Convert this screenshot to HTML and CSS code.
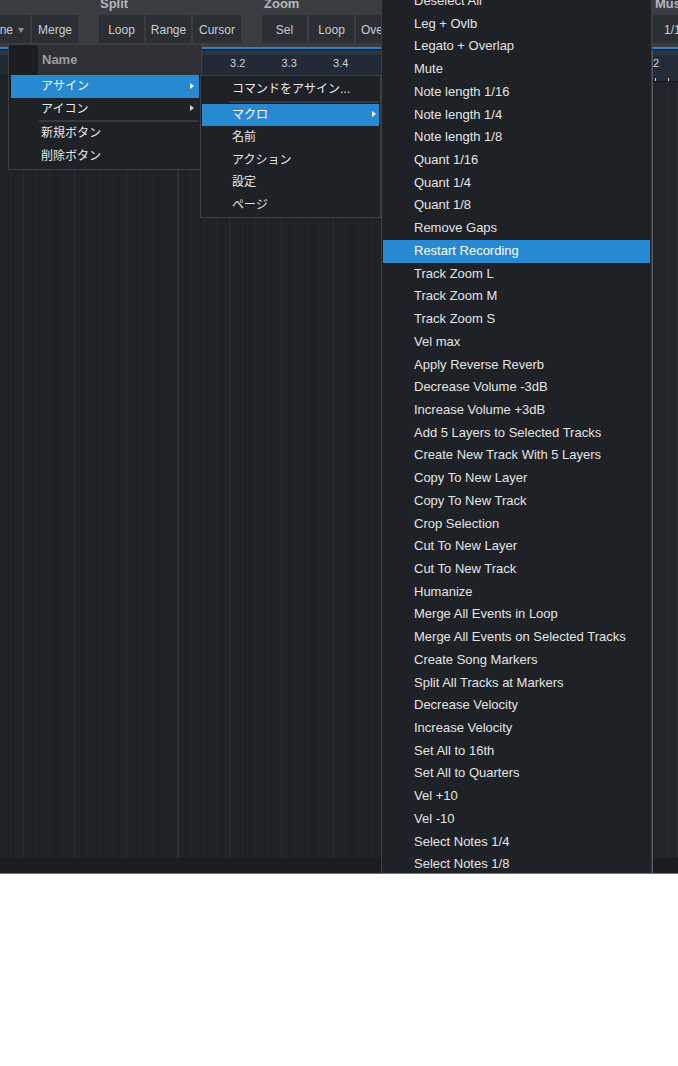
FILE: index.html
```html
<!DOCTYPE html>
<html lang="ja">
<head>
<meta charset="utf-8">
<title>Macro menu</title>
<link rel="stylesheet" href="styles.css">
</head>
<body>
<div class="app">
  <div class="toolbar">
    <div class="group g-edit">
      <div class="group-label"></div>
      <div class="btns">
        <div class="btn btn-ne"><span>ne</span><span class="caret"></span></div>
        <div class="btn btn-merge">Merge</div>
      </div>
    </div>
    <div class="group g-split">
      <div class="group-label">Split</div>
      <div class="btns">
        <div class="btn">Loop</div>
        <div class="btn">Range</div>
        <div class="btn btn-cursor">Cursor</div>
      </div>
    </div>
    <div class="group g-zoom">
      <div class="group-label">Zoom</div>
      <div class="btns">
        <div class="btn">Sel</div>
        <div class="btn">Loop</div>
        <div class="btn btn-ove">Overlap</div>
      </div>
    </div>
    <div class="group g-mus">
      <div class="group-label">Music</div>
      <div class="btns">
        <div class="btn btn-mus">1/16</div>
      </div>
    </div>
  </div>

  <div class="main">
    <div class="pane pane-left">
      <div class="ruler"><span>3.2</span><span>3.3</span><span>3.4</span></div>
      <div class="tracks"></div>
      <div class="strip"></div>
    </div>
    <div class="pane pane-right">
      <div class="ruler ruler-right">2</div>
      <div class="tracks tracks-right"></div>
      <div class="strip"></div>
    </div>
  </div>

  <div class="menu menu-assign">
    <div class="menu-head"><div class="head-icon"></div><div class="head-name">Name</div></div>
    <div class="menu-item has-sub active">アサイン</div>
    <div class="menu-item has-sub">アイコン</div>
    <div class="sep"></div>
    <div class="menu-item">新規ボタン</div>
    <div class="menu-item">削除ボタン</div>
  </div>

  <div class="menu menu-sub">
    <div class="menu-item">コマンドをアサイン...</div>
    <div class="sep"></div>
    <div class="menu-item has-sub active">マクロ</div>
    <div class="menu-item">名前</div>
    <div class="menu-item">アクション</div>
    <div class="menu-item">設定</div>
    <div class="menu-item">ページ</div>
  </div>

  <div class="menu menu-macros">
    <div class="menu-item">Deselect All</div>
    <div class="menu-item">Leg + Ovlb</div>
    <div class="menu-item">Legato + Overlap</div>
    <div class="menu-item">Mute</div>
    <div class="menu-item">Note length 1/16</div>
    <div class="menu-item">Note length 1/4</div>
    <div class="menu-item">Note length 1/8</div>
    <div class="menu-item">Quant 1/16</div>
    <div class="menu-item">Quant 1/4</div>
    <div class="menu-item">Quant 1/8</div>
    <div class="menu-item">Remove Gaps</div>
    <div class="menu-item active">Restart Recording</div>
    <div class="menu-item">Track Zoom L</div>
    <div class="menu-item">Track Zoom M</div>
    <div class="menu-item">Track Zoom S</div>
    <div class="menu-item">Vel max</div>
    <div class="menu-item">Apply Reverse Reverb</div>
    <div class="menu-item">Decrease Volume -3dB</div>
    <div class="menu-item">Increase Volume +3dB</div>
    <div class="menu-item">Add 5 Layers to Selected Tracks</div>
    <div class="menu-item">Create New Track With 5 Layers</div>
    <div class="menu-item">Copy To New Layer</div>
    <div class="menu-item">Copy To New Track</div>
    <div class="menu-item">Crop Selection</div>
    <div class="menu-item">Cut To New Layer</div>
    <div class="menu-item">Cut To New Track</div>
    <div class="menu-item">Humanize</div>
    <div class="menu-item">Merge All Events in Loop</div>
    <div class="menu-item">Merge All Events on Selected Tracks</div>
    <div class="menu-item">Create Song Markers</div>
    <div class="menu-item">Split All Tracks at Markers</div>
    <div class="menu-item">Decrease Velocity</div>
    <div class="menu-item">Increase Velocity</div>
    <div class="menu-item">Set All to 16th</div>
    <div class="menu-item">Set All to Quarters</div>
    <div class="menu-item">Vel +10</div>
    <div class="menu-item">Vel -10</div>
    <div class="menu-item">Select Notes 1/4</div>
    <div class="menu-item">Select Notes 1/8</div>
    <div class="menu-item">Select Notes 1/16</div>
  </div>
</div>
</body>
</html>
```

FILE: styles.css
```css
* { box-sizing: border-box; }

body {
  margin: 0;
  background: #ffffff;
  font-family: "Liberation Sans", "Noto Sans CJK JP", sans-serif;
}

.app {
  position: relative;
  width: 678px;
  height: 874px;
  border-bottom: 1px solid #707276;
  overflow: hidden;
  display: flex;
  flex-direction: column;
  background: #202327;
}

/* ---------- toolbar ---------- */
.toolbar {
  flex: none;
  height: 49px;
  display: flex;
  align-items: flex-start;
  background: #393c41;
  border-bottom: 2px solid #2a85cb;
}

.group {
  flex: none;
  display: flex;
  flex-direction: column;
}

.group-label {
  height: 15px;
  line-height: 8px;
  font-size: 13px;
  font-weight: bold;
  color: #b3b7bc;
  padding-left: 1px;
  white-space: nowrap;
}

.btns {
  display: flex;
  gap: 2px;
}

.btn {
  flex: none;
  width: 45px;
  height: 28px;
  line-height: 31px;
  background: #2b2e33;
  color: #c9cdd2;
  font-size: 12px;
  text-align: center;
  white-space: nowrap;
  overflow: hidden;
}

.btn-ne {
  width: 30px;
  display: flex;
  align-items: center;
  justify-content: flex-end;
  gap: 5px;
  padding-right: 6px;
  padding-top: 3px;
}

.caret {
  width: 0;
  height: 0;
  border-top: 5px solid #8b8f95;
  border-left: 3.5px solid transparent;
  border-right: 3.5px solid transparent;
}

.btn-merge { width: 46px; }
.btn-cursor { width: 48px; }
.btn-ove {
  text-align: left;
  padding-left: 5px;
}

.g-edit { width: 78px; }
.g-split { margin-left: 21px; }
.g-zoom { margin-left: 21px; }
.g-zoom .group-label { padding-left: 2px; }

.g-mus {
  margin-left: auto;
  width: 25px;
}
.g-mus .group-label { padding-left: 2px; }
.btn-mus {
  text-align: left;
  padding-left: 11px;
}

/* ---------- arrangement ---------- */
.main {
  flex: 1;
  min-height: 0;
  display: flex;
  border-top: 1px solid #111316;
}

.pane {
  display: flex;
  flex-direction: column;
}

.pane-left {
  flex: none;
  width: 652px;
}

.pane-right {
  flex: 1;
  border-left: 1px solid #55585d;
}

.ruler {
  flex: none;
  height: 25px;
  display: flex;
  padding-left: 212px;
  padding-top: 2px;
  line-height: 23px;
  font-size: 11px;
  color: #cdd1d6;
  background: linear-gradient(#2c3542 0 5px, #222a35 5px);
}

.ruler span {
  width: 51.5px;
  text-align: center;
}

.ruler-right {
  height: 32px;
  padding-left: 0;
  border-bottom: 1px solid #14161a;
  background:
    linear-gradient(#cfd3d8, #cfd3d8) no-repeat 2px 28px / 1px 3px,
    linear-gradient(#cfd3d8, #cfd3d8) no-repeat 15px 28px / 1px 3px,
    linear-gradient(#2c3542 0 5px, #232b37 5px);
}

.tracks {
  flex: 1;
  background-color: #1f2226;
  background-image:
    linear-gradient(90deg, #33363b 1px, transparent 1px),
    linear-gradient(90deg, #2a2d32 1px, transparent 1px),
    linear-gradient(90deg, #25282c 1px, transparent 1px);
  background-size: 206.4px 100%, 51.6px 100%, 12.9px 100%;
  background-position: 177.7px 0, 22.9px 0, 10px 0;
}

.tracks-right {
  background-color: #212428;
  background-image:
    linear-gradient(90deg, #2a2d32 1px, transparent 1px),
    linear-gradient(90deg, #2a2d32 1px, transparent 1px);
  background-size: 1px 100%, 1px 100%;
  background-position: 15px 0, 24px 0;
  background-repeat: no-repeat;
}

.strip {
  flex: none;
  height: 15px;
  background: #1a1c20;
}

/* ---------- menus ---------- */
.menu {
  position: absolute;
  background: #1e2125;
  border: 1px solid #3b3e43;
  color: #e6e8ea;
}

.menu-item {
  position: relative;
  white-space: nowrap;
}

.menu-item.active {
  background: #2889d3;
  color: #ffffff;
}

.has-sub::after {
  content: "";
  position: absolute;
  top: 50%;
  margin-top: -3.5px;
  width: 0;
  height: 0;
  border-left: 4px solid #d0d3d6;
  border-top: 3.5px solid transparent;
  border-bottom: 3.5px solid transparent;
}

.active.has-sub::after { border-left-color: #ffffff; }

.sep {
  height: 2px;
  background: #35383d;
}

/* first level */
.menu-assign {
  left: 8px;
  top: 44px;
  width: 194px;
  padding-bottom: 2px;
  font-size: 12px;
}

.menu-head {
  display: flex;
  height: 30px;
}

.head-icon {
  width: 29px;
  background: #1b1d21;
}

.head-name {
  flex: 1;
  padding-left: 4px;
  background: #2e3034;
  color: #9b9fa5;
  font-size: 13px;
  font-weight: bold;
  line-height: 30px;
}

.menu-assign .menu-item {
  margin: 0 2px;
  padding-left: 30px;
  height: 22.5px;
  line-height: 22.5px;
}

.menu-assign .has-sub::after { right: 5px; }

.menu-assign .sep { margin: 0 2px 0 30px; }

/* second level */
.menu-sub {
  left: 200px;
  top: 75px;
  width: 181px;
  padding: 2px 0 1px;
  font-size: 12px;
}

.menu-sub .menu-item {
  margin: 0 1px;
  padding-left: 30px;
  height: 22.5px;
  line-height: 22.5px;
}

.menu-sub .has-sub::after { right: 3px; }

.menu-sub .sep { margin: 0 1px 1px 29px; }

/* macro list */
.menu-macros {
  left: 381px;
  top: -11px;
  width: 271px;
  font-size: 13px;
  color: #e2e4e6;
}

.menu-macros .menu-item {
  margin: 0 1px;
  padding-left: 31px;
  height: 22.72px;
  line-height: 22.72px;
}
```
